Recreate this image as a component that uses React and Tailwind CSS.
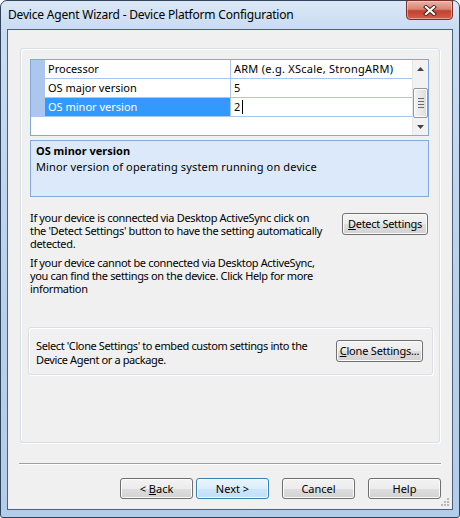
const normalBtn =
  "h-[21px] rounded-[3px] border border-[#707070] bg-[linear-gradient(#f3f3f3_0%,#ececec_50%,#dedede_51%,#d2d2d2_100%)] shadow-[inset_0_0_0_1px_#fbfbfb] flex items-center justify-center text-[11px] leading-[14px] text-black whitespace-nowrap";
const defaultBtn =
  "h-[21px] rounded-[3px] border border-[#3c7fb1] bg-[linear-gradient(#e8f5fd_0%,#dcedfb_50%,#cbe5f9_51%,#c1e0f7_100%)] shadow-[inset_0_0_0_1px_#f4fbff] flex items-center justify-center text-[11px] leading-[14px] text-black whitespace-nowrap";

function Row({ name, value, selected, caret }) {
  return (
    <div className="flex h-[19px]">
      <div className="w-[14px] bg-[#abc7ee]" />
      <div
        className={`w-[186px] border-b border-r border-[#a9c6ee] pl-[3px] leading-[18px] ${
          selected ? "bg-[#3399ff] text-white" : "bg-white"
        }`}
      >
        {name}
      </div>
      <div className="flex-1 border-b border-[#a9c6ee] bg-white pl-[3px] leading-[18px] flex items-center tracking-[0.25px]">
        <span>{value}</span>
        {caret && <span className="ml-[1px] w-px h-[14px] bg-black" />}
      </div>
    </div>
  );
}

export default function App() {
  return (
    <div className="w-[460px] h-[518px] bg-white">
      <div className="w-[460px] h-[518px] flex flex-col rounded-t-[7px] rounded-b-[3px] border border-[#31445c] bg-[linear-gradient(180deg,#dbe8f7_0%,#cadcf1_28px,#b9d0ea_60%,#b3cce9_100%)] px-[6px] pb-[7px] font-['Noto_Sans',sans-serif] text-[11px] text-black">
        {/* title bar */}
        <div className="h-[28px] flex items-start justify-between">
          <div className="pl-[1px] pt-[6px] text-[12px] leading-[16px] tracking-[-0.2px] text-black whitespace-nowrap">
            Device Agent Wizard - Device Platform Configuration
          </div>
          <div className="-mt-px w-[47px] h-[20px] rounded-b-[4px] rounded-t-[2px] border border-[#7a2f29] bg-[linear-gradient(#eab2a4_0%,#d98474_45%,#c4402f_55%,#d2604c_100%)] shadow-[inset_0_0_0_1px_rgba(255,220,210,0.5)] flex items-center justify-center">
            <svg width="14" height="11" viewBox="0 0 14 11">
              <path d="M3 2 L11 9 M11 2 L3 9" stroke="#4a1e1a" strokeWidth="4" strokeLinecap="square" />
              <path d="M3 2 L11 9 M11 2 L3 9" stroke="#ffffff" strokeWidth="2.2" strokeLinecap="square" />
            </svg>
          </div>
        </div>

        {/* client area */}
        <div className="relative flex-1 border border-[#4a607c] bg-[#f0f0f0] flex flex-col">
          {/* main group box */}
          <div className="mt-[18px] ml-[12px] mr-[12px] h-[395px] rounded-[3px] border border-[#d5dfe5] shadow-[1px_1px_0_#ffffff,inset_1px_1px_0_#ffffff] pl-[9px] pr-[10px] pt-[10px] flex flex-col">
            {/* property grid */}
            <div className="h-[77px] border border-[#84a9d9] flex bg-white">
              <div className="flex-1 flex flex-col">
                <Row name="Processor" value="ARM (e.g. XScale, StrongARM)" />
                <Row name="OS major version" value="5" />
                <Row name="OS minor version" value="2" selected caret />
                <div className="flex-1 bg-white" />
              </div>
              {/* scrollbar */}
              <div className="w-[16px] bg-[#f2f2f2] border-l border-[#e6e6e6] flex flex-col">
                <div className="h-[17px] flex items-center justify-center">
                  <svg width="7" height="4" viewBox="0 0 7 4">
                    <path d="M0 4 L3.5 0 L7 4 Z" fill="#444" />
                  </svg>
                </div>
                <div className="h-[11px]" />
                <div className="h-[30px] rounded-[2px] border border-[#979797] bg-[linear-gradient(90deg,#f4f4f4_0%,#e8e8e8_50%,#dcdcdc_100%)] shadow-[inset_0_0_0_1px_#fbfbfb] flex flex-col items-center justify-center gap-[2px]">
                  <div className="w-[6px] h-px bg-[#6b6b6b]" />
                  <div className="w-[6px] h-px bg-[#6b6b6b]" />
                  <div className="w-[6px] h-px bg-[#6b6b6b]" />
                  <div className="w-[6px] h-px bg-[#6b6b6b]" />
                </div>
                <div className="flex-1" />
                <div className="h-[17px] flex items-center justify-center">
                  <svg width="7" height="4" viewBox="0 0 7 4">
                    <path d="M0 0 L7 0 L3.5 4 Z" fill="#444" />
                  </svg>
                </div>
              </div>
            </div>

            {/* description */}
            <div className="mt-[4px] h-[57px] border border-[#84a9d9] bg-[#dce9fb] pl-[5px] pt-[2px] leading-[16px]">
              <div className="font-bold">OS minor version</div>
              <div className="tracking-[0.14px]">Minor version of operating system running on device</div>
            </div>

            {/* detect row */}
            <div className="mt-[14px] flex justify-between items-start">
              <div className="leading-[13px] whitespace-nowrap tracking-[-0.34px]">
                <div>
                  If your device is connected via Desktop ActiveSync click on
                  <br />
                  the 'Detect Settings' button to have the setting automatically
                  <br />
                  detected.
                </div>
                <div className="mt-[6px]">
                  If your device cannot be connected via Desktop ActiveSync,
                  <br />
                  you can find the settings on the device. Click Help for more
                  <br />
                  information
                </div>
              </div>
              <div className={`${normalBtn} mt-[2px] mr-[1px] w-[86px] !h-[22px] tracking-[-0.3px]`}>
                <span>
                  <span className="underline">D</span>etect Settings
                </span>
              </div>
            </div>

            {/* clone group */}
            <div className="mt-[32px] -ml-[2px] -mr-[4px] h-[48px] rounded-[3px] border border-[#d9dfe4] shadow-[1px_1px_0_#ffffff,inset_1px_1px_0_#ffffff] pl-[7px] pr-[9px] pt-[11px] flex justify-between items-start">
              <div className="leading-[14px] whitespace-nowrap tracking-[-0.38px]">
                Select 'Clone Settings' to embed custom settings into the
                <br />
                Device Agent or a package.
              </div>
              <div className={`${normalBtn} mt-[1px] w-[87px] !h-[22px] tracking-[-0.2px]`}>
                <span>
                  <span className="underline">C</span>lone Settings...
                </span>
              </div>
            </div>
          </div>

          {/* separator */}
          <div className="mt-[20px] ml-[11px] mr-[11px] h-[2px] border-t border-[#a0a0a0] border-b border-b-[#ffffff]" />

          {/* bottom buttons */}
          <div className="mt-[13px] mr-[11px] flex justify-end">
            <div className={`${normalBtn} w-[73px]`}>
              <span>
                &lt; <span className="underline">B</span>ack
              </span>
            </div>
            <div className={`${defaultBtn} w-[73px] ml-[3px]`}>Next &gt;</div>
            <div className={`${normalBtn} w-[73px] ml-[13px]`}>Cancel</div>
            <div className={`${normalBtn} w-[73px] ml-[13px]`}>Help</div>
          </div>

          {/* resize grip */}
          <svg className="absolute right-[2px] bottom-[2px]" width="10" height="10" viewBox="0 0 10 10">
            <rect x="7" y="1" width="2" height="2" fill="#b8b8b8" />
            <rect x="4" y="4" width="2" height="2" fill="#b8b8b8" />
            <rect x="7" y="4" width="2" height="2" fill="#b8b8b8" />
            <rect x="1" y="7" width="2" height="2" fill="#b8b8b8" />
            <rect x="4" y="7" width="2" height="2" fill="#b8b8b8" />
            <rect x="7" y="7" width="2" height="2" fill="#b8b8b8" />
          </svg>
        </div>
      </div>
    </div>
  );
}
